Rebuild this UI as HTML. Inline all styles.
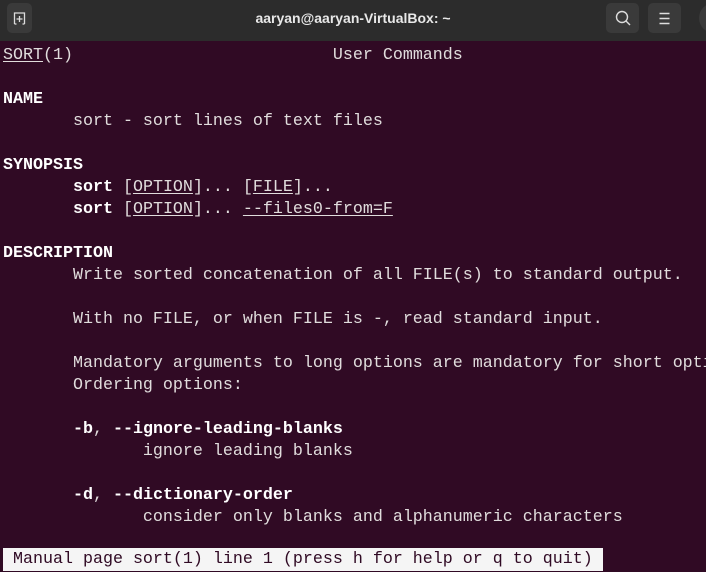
<!DOCTYPE html>
<html><head><style>
html,body{margin:0;padding:0;width:706px;height:571px;overflow:hidden;background:#300a24}
#bar{position:absolute;left:0;top:0;width:706px;height:41px;background:#2c2c2c;}
.btn{position:absolute;top:3px;width:33px;height:30px;background:#3a3a3a;border-radius:5px}
#title{position:absolute;top:0;left:0;width:706px;text-align:center;font:bold 14px "Liberation Sans",sans-serif;line-height:36px;color:#e8e8e8}
#term{position:absolute;left:3px;top:45px;width:703px;overflow:hidden;font-family:"Liberation Mono",monospace;font-size:16.67px;line-height:22px;color:#e0dcdc;white-space:pre}
b{color:#fff}
u{text-decoration-thickness:1px;text-underline-offset:2px}
#status{position:absolute;left:3px;top:548px;width:600px;height:23px;background:#f5f5f5;color:#300a24;font-family:"Liberation Mono",monospace;font-size:16.67px;line-height:24px;white-space:pre}
</style></head><body>
<div id="bar">
<div class="btn" style="left:7px;width:25px"><svg width="25" height="30"><path d="M7.5 21V10h10v11M7.5 21h2M17.5 21h-2M12.5 13v6M9.5 16h6" stroke="#ddd" stroke-width="1.3" fill="none"/></svg></div>
<div id="title">aaryan@aaryan-VirtualBox: ~</div>
<div class="btn" style="left:606px"><svg width="33" height="30"><circle cx="16" cy="14" r="5.5" stroke="#ddd" stroke-width="1.4" fill="none"/><path d="M20 18l4 4" stroke="#ddd" stroke-width="1.4"/></svg></div>
<div class="btn" style="left:648px"><svg width="33" height="30"><path d="M11.5 10.5h10M11.5 15.5h10M11.5 20.5h10" stroke="#ddd" stroke-width="1.4"/></svg></div>
<div class="btn" style="left:699px;border-radius:15px"></div>
</div>
<div id="term"><u>SORT</u>(1)                          User Commands

<b>NAME</b>
       sort - sort lines of text files

<b>SYNOPSIS</b>
       <b>sort</b> [<u>OPTION</u>]... [<u>FILE</u>]...
       <b>sort</b> [<u>OPTION</u>]... <u>--files0-from=F</u>

<b>DESCRIPTION</b>
       Write sorted concatenation of all FILE(s) to standard output.

       With no FILE, or when FILE is -, read standard input.

       Mandatory arguments to long options are mandatory for short options too.
       Ordering options:

       <b>-b</b>, <b>--ignore-leading-blanks</b>
              ignore leading blanks

       <b>-d</b>, <b>--dictionary-order</b>
              consider only blanks and alphanumeric characters
</div>
<div id="status"> Manual page sort(1) line 1 (press h for help or q to quit)</div>
</body></html>
